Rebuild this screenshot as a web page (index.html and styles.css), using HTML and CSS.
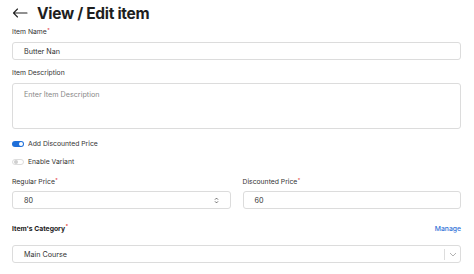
FILE: index.html
```html
<!DOCTYPE html>
<html>
<head>
<meta charset="utf-8">
<link rel="stylesheet" href="styles.css">
</head>
<body>
<div class="page">
  <div class="header">
    <svg class="back" width="16" height="10" viewBox="0 0 16 10"><path d="M15 5H1.5M5.5 1L1.5 5l4 4" fill="none" stroke="#222" stroke-width="1.1" stroke-linecap="round" stroke-linejoin="round"/></svg>
    <h1 class="title">View / Edit item</h1>
  </div>

  <label class="label lbl-name">Item Name<span class="req">*</span></label>
  <div class="input">Butter Nan</div>

  <label class="label lbl-desc">Item Description</label>
  <div class="textarea placeholder">Enter Item Description</div>

  <div class="toggle-row tr1">
    <span class="toggle on"><span class="knob"></span></span>
    <span class="toggle-text">Add Discounted Price</span>
  </div>
  <div class="toggle-row tr2">
    <span class="toggle off"><span class="knob"></span></span>
    <span class="toggle-text">Enable Variant</span>
  </div>

  <div class="price-grid">
    <div class="field">
      <label class="label">Regular Price<span class="req">*</span></label>
      <div class="input with-spin">80
        <svg class="spin" width="5" height="7" viewBox="0 0 5 7"><path d="M1 2.6L2.5 1.1 4 2.6M1 4.4L2.5 5.9 4 4.4" fill="none" stroke="#555" stroke-width="0.9"/></svg>
      </div>
    </div>
    <div class="field">
      <label class="label">Discounted Price<span class="req">*</span></label>
      <div class="input">60</div>
    </div>
  </div>

  <div class="cat-row">
    <span class="cat-label">Item's Category<span class="req">*</span></span>
    <span class="manage">Manage</span>
  </div>
  <div class="input select">
    <span>Main Course</span>
    <span class="sel-ind">
      <span class="sep"></span>
      <svg width="8" height="5" viewBox="0 0 8 5"><path d="M1 1l3 3 3-3" fill="none" stroke="#aaa" stroke-width="0.9"/></svg>
    </span>
  </div>
</div>
</body>
</html>
```

FILE: styles.css
```css
* { box-sizing: border-box; }
html, body { margin: 0; padding: 0; background: #fff; }
body {
  font-family: Inter, "Noto Sans", "Liberation Sans", sans-serif;
  color: #333;
  width: 474px;
  height: 274px;
  overflow: hidden;
}
.page {
  padding: 0 13px 0 12px;
  display: flex;
  flex-direction: column;
}
.header {
  display: flex;
  align-items: center;
  height: 26px;
  gap: 9px;
}
.back { flex: none; }
.title {
  margin: 0;
  font-size: 15.5px;
  font-weight: 700;
  color: #1e1e1e;
  letter-spacing: -0.3px;
}
.label {
  display: block;
  font-size: 6.8px;
  color: #333;
  line-height: 9px;
}
.req { color: #e53935; font-size: 5px; vertical-align: top; position: relative; top: -1px; margin-left: 0.5px; }
.lbl-name { margin-top: 1px; }
.input {
  height: 18px;
  border: 1px solid #dcdcdc;
  border-radius: 3px;
  font-size: 7.2px;
  color: #333;
  padding-left: 11px;
  display: flex;
  align-items: center;
  margin-top: 6px;
}
.lbl-desc { margin-top: 8px; }
.textarea {
  height: 46px;
  border: 1px solid #dcdcdc;
  border-radius: 3px;
  font-size: 7.2px;
  padding: 6px 11px;
  margin-top: 6px;
}
.placeholder { color: #888; }
.toggle-row {
  display: flex;
  align-items: center;
  gap: 4px;
  height: 9px;
}
.tr1 { margin-top: 10px; }
.tr2 { margin-top: 9px; }
.toggle-text { font-size: 6.8px; color: #333; }
.toggle {
  width: 12px;
  height: 6px;
  border-radius: 3px;
  position: relative;
  flex: none;
}
.toggle.on { background: #1e6fd9; }
.toggle.off { background: #fff; border: 0.5px solid #ddd; }
.knob {
  position: absolute;
  top: 1px;
  width: 4px;
  height: 4px;
  border-radius: 50%;
}
.toggle.on .knob { background: #fff; right: 1px; }
.toggle.off .knob { background: #cfcfcf; left: 0.5px; top: 0.5px; }
.price-grid {
  display: grid;
  grid-template-columns: 1fr 1fr;
  column-gap: 12px;
  margin-top: 11px;
}
.field .input { margin-top: 5px; }
.with-spin { justify-content: space-between; padding-right: 11px; }
.cat-row {
  display: flex;
  justify-content: space-between;
  align-items: center;
  margin-top: 15px;
  height: 9px;
}
.cat-label { font-size: 6.8px; font-weight: 700; color: #222; }
.manage { font-size: 6.8px; color: #2f6fd6; font-weight: 500; }
.select {
  margin-top: 12px;
  justify-content: space-between;
  padding-right: 3px;
}
.sel-ind { display: flex; align-items: center; gap: 4px; }
.sep { width: 1px; height: 11px; background: #ddd; }
```
